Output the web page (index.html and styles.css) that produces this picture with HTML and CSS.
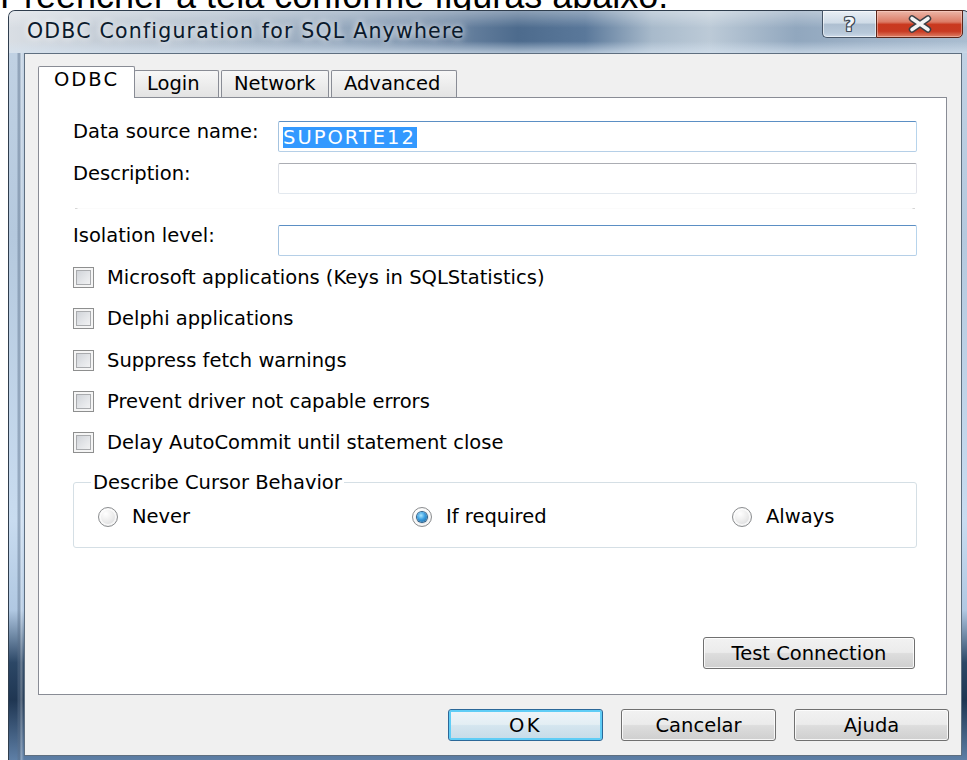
FILE: index.html
```html
<!DOCTYPE html>
<html lang="pt">
<head>
<meta charset="utf-8">
<title>ODBC Configuration for SQL Anywhere</title>
<link rel="stylesheet" href="styles.css">
</head>
<body>
  <div class="intro"><p class="intro-text">Preencher a tela conforme figuras abaixo.</p></div>

  <div class="window">
    <div class="titlebar">
      <span class="title">ODBC Configuration for SQL Anywhere</span>
      <div class="caption-buttons">
        <button class="cap-btn cap-help" type="button"><span class="help-glyph">?</span></button>
        <button class="cap-btn cap-close" type="button">
          <svg class="close-glyph" width="26" height="18" viewBox="0 0 26 18" aria-hidden="true">
            <path d="M5 3.5 L21 14.5 M21 3.5 L5 14.5" stroke="#3a3f45" stroke-width="6.5" stroke-linecap="round" fill="none"/>
            <path d="M5 3.5 L21 14.5 M21 3.5 L5 14.5" stroke="#f4f4f4" stroke-width="3.6" stroke-linecap="round" fill="none"/>
          </svg>
        </button>
      </div>
    </div>

    <div class="frame">
      <div class="client">
        <div class="tabstrip">
          <div class="tab tab-active tab-odbc">ODBC</div>
          <div class="tab tab-login">Login</div>
          <div class="tab tab-network">Network</div>
          <div class="tab tab-advanced">Advanced</div>
        </div>

        <div class="tabpanel">
          <div class="fields">
            <span class="field-label">Data source name:</span>
            <div class="textbox textbox-focus"><span class="selection">SUPORTE12</span></div>
            <span class="field-label">Description:</span>
            <div class="textbox"></div>
            <div class="separator"></div>
            <span class="field-label">Isolation level:</span>
            <div class="textbox textbox-focus"></div>
          </div>

          <ul class="checks">
            <li class="check-row"><span class="checkbox"></span>Microsoft applications (Keys in SQLStatistics)</li>
            <li class="check-row"><span class="checkbox"></span>Delphi applications</li>
            <li class="check-row"><span class="checkbox"></span>Suppress fetch warnings</li>
            <li class="check-row"><span class="checkbox"></span>Prevent driver not capable errors</li>
            <li class="check-row"><span class="checkbox"></span>Delay AutoCommit until statement close</li>
          </ul>

          <fieldset class="group">
            <legend class="group-title">Describe Cursor Behavior</legend>
            <div class="radios">
              <span class="radio-row"><span class="radio"></span>Never</span>
              <span class="radio-row"><span class="radio radio-on"></span>If required</span>
              <span class="radio-row"><span class="radio"></span>Always</span>
            </div>
          </fieldset>

          <div class="panel-actions">
            <button class="btn btn-test" type="button">Test Connection</button>
          </div>
        </div>

        <div class="dialog-buttons">
          <button class="btn btn-dialog btn-default" type="button"><span class="caps">OK</span></button>
          <button class="btn btn-dialog" type="button">Cancelar</button>
          <button class="btn btn-dialog" type="button">Ajuda</button>
        </div>
      </div>
    </div>
  </div>
</body>
</html>
```

FILE: styles.css
```css
html, body {
  margin: 0;
  height: 100%;
  overflow: hidden;
  background: #fff;
}

body {
  font-family: "DejaVu Sans", Verdana, sans-serif;
  font-size: 19.5px;
  color: #000;
}

/* heading line above the dialog, mostly scrolled out of view */
.intro {
  height: 10px;
  overflow: hidden;
}

.intro-text {
  margin: -22.5px 0 0 0;
  font: 36px/36px "Liberation Sans", Arial, sans-serif;
  white-space: nowrap;
}

/* ---------- window chrome ---------- */
.window {
  box-sizing: border-box;
  width: 962px;
  height: 750px;
  margin-left: 8px;
  display: flex;
  flex-direction: column;
  border: 1px solid #2f3d4d;
  border-bottom: none;
  border-radius: 7px 7px 0 0;
  background:
    linear-gradient(to right, rgba(255,255,255,0) 0, rgba(255,255,255,0) 8px, rgba(90,110,135,.45) 9px, rgba(90,110,135,.45) 11px, rgba(255,255,255,.35) 12px, rgba(255,255,255,0) 15px),
    linear-gradient(to bottom, #c3d3e4 0%, #b5c9de 30%, #c9dcf0 68%, #b0c8e2 80%, #2c4766 87%, #1f3652 92%, #5e7fa6 100%);
}

.titlebar {
  height: 42px;
  display: flex;
  justify-content: space-between;
  align-items: flex-start;
  border-radius: 6px 6px 0 0;
  background:
    linear-gradient(to bottom, rgba(255,255,255,.35) 0, rgba(255,255,255,0) 40%, rgba(255,255,255,0) 72%, rgba(214,227,240,.7) 100%),
    linear-gradient(to right, #d9dee4 0, #c3ccd6 10%, #aebccb 22%, #91a5bb 35%, #7189a5 45%, #4d6b8d 53%, #5a789a 60%, #a8bacb 67%, #bccad7 73%, #91a7be 82%, #9fb3c8 90%, #aabdd0 100%);
}

.title {
  padding: 8px 0 0 18px;
  font-size: 20.5px;
  line-height: 24px;
  letter-spacing: 1.2px;
  color: #0b1a2c;
  white-space: nowrap;
  text-shadow: 0 0 6px rgba(255,255,255,.9), 0 0 12px rgba(255,255,255,.7);
}

.caption-buttons {
  display: flex;
  margin: -1px 6px 0 0;
}

.cap-btn {
  box-sizing: border-box;
  height: 28px;
  padding: 0;
  display: flex;
  align-items: center;
  justify-content: center;
  border: 1px solid #465567;
  cursor: default;
}

.cap-help {
  width: 54px;
  border-right: none;
  border-radius: 0 0 0 5px;
  background: linear-gradient(#e9eff5 0, #cfdbe7 45%, #aebfd1 52%, #b8c9da 85%, #cfdceb 100%);
  box-shadow: inset 0 0 0 1px rgba(255,255,255,.55);
}

.help-glyph {
  font-family: "DejaVu Sans", sans-serif;
  font-weight: bold;
  font-size: 20px;
  line-height: 1;
  color: #f3f6f9;
  text-shadow: 1px 0 0 #3e4854, -1px 0 0 #3e4854, 0 1px 0 #3e4854, 0 -1px 0 #3e4854,
               1px 1px 0 #3e4854, -1px -1px 0 #3e4854, 1px -1px 0 #3e4854, -1px 1px 0 #3e4854;
}

.cap-close {
  width: 87px;
  border-color: #5a2519;
  border-radius: 0 0 5px 0;
  background: linear-gradient(#ecb6a8 0, #dc7c66 42%, #c9391f 52%, #c83a22 78%, #de8167 100%);
  box-shadow: inset 0 0 0 1px rgba(255,220,210,.45);
}

.close-glyph {
  display: block;
  margin-top: -1px;
}

/* ---------- dialog body ---------- */
.frame {
  flex: 1;
  display: flex;
  padding: 0 7px 4px 15px;
}

.client {
  flex: 1;
  display: flex;
  flex-direction: column;
  border: 1px solid #5f6f80;
  background: #f0f0f0;
  padding: 12px 14px 14px 13px;
}

/* tabs */
.tabstrip {
  display: flex;
  align-items: flex-end;
  height: 31px;
}

.tab {
  box-sizing: border-box;
  height: 27px;
  padding-left: 12px;
  border: 1px solid #898c95;
  border-bottom: none;
  border-radius: 2px 2px 0 0;
  background: linear-gradient(#f7f7f7 0, #ededed 50%, #e3e3e3 100%);
  line-height: 25px;
  white-space: nowrap;
}

.tab-active {
  position: relative;
  z-index: 1;
  height: 32px;
  margin-bottom: -1px;
  padding-left: 15px;
  line-height: 26px;
  letter-spacing: 2px;
  background: #fff;
}

.tab-odbc { width: 97px; }
.tab-login { width: 85px; margin-left: -1px; }
.tab-network { width: 108px; margin-left: 2px; }
.tab-advanced { width: 126px; margin-left: 2px; }

.tabpanel {
  flex: 1;
  display: flex;
  flex-direction: column;
  border: 1px solid #898c95;
  background: #fff;
  padding: 23px 29px 25px 34px;
}

/* text fields */
.fields {
  display: grid;
  grid-template-columns: 205px 1fr;
  grid-template-rows: 31px 31px 9px 31px;
  row-gap: 11px;
}

.field-label {
  margin-top: -1px;
  line-height: 23px;
  white-space: nowrap;
}

.textbox {
  box-sizing: border-box;
  height: 31px;
  padding: 4px;
  border: 1px solid;
  border-color: #abadb3 #e2e3ea #e3e9ef #dbdfe6;
  border-radius: 2px;
  background: #fff;
}

.textbox-focus {
  border-color: #5b8fc4 #b7d4ec #b5cfe7 #a4c3e0;
}

.selection {
  display: inline-block;
  line-height: 21px;
  padding-right: 1px;
  letter-spacing: 2px;
  background: #3399ff;
  color: #fff;
}

.separator {
  grid-column: 1 / -1;
  align-self: start;
  height: 1px;
  margin: 3px 2px 0;
  background: linear-gradient(to right, #d6d6d6 0, #d6d6d6 2px, #fbfbfb 3px, #fbfbfb calc(100% - 3px), #d6d6d6 calc(100% - 2px));
}

/* check boxes */
.checks {
  list-style: none;
  margin: 11px 0 0;
  padding: 0;
  display: flex;
  flex-direction: column;
  gap: 20.3px;
}

.check-row {
  display: flex;
  align-items: center;
  gap: 13px;
  height: 21px;
  line-height: 21px;
  white-space: nowrap;
}

.checkbox {
  box-sizing: border-box;
  flex: none;
  width: 21px;
  height: 21px;
  border: 1px solid #8e8f8f;
  background: linear-gradient(135deg, #c9cdd3 0, #e4e6e9 55%, #f8f8f8 100%);
  box-shadow: inset 0 0 0 2px #f5f5f5, inset 0 0 0 3px #a9abae;
}

/* radio group */
.group {
  margin: 18px 0 0;
  padding: 12px 20px 20px 24px;
  min-width: 0;
  border: 1px solid #d5dfe5;
  border-radius: 3px;
}

.group-title {
  margin-left: -7px;
  padding: 0 2px;
}

.radios {
  display: grid;
  grid-template-columns: 314px 320px auto;
}

.radio-row {
  display: flex;
  align-items: center;
  gap: 14px;
  height: 21px;
  line-height: 21px;
  white-space: nowrap;
}

.radio {
  box-sizing: border-box;
  position: relative;
  flex: none;
  width: 20px;
  height: 20px;
  border: 1px solid #8c8e90;
  border-radius: 50%;
  background: radial-gradient(circle at 38% 32%, #ffffff 0, #ececec 45%, #cfd0d2 100%);
  box-shadow: inset 0 0 0 2px rgba(255,255,255,.7);
}

.radio-on::after {
  content: "";
  position: absolute;
  left: 4px;
  top: 4px;
  width: 10px;
  height: 10px;
  border-radius: 50%;
  background: radial-gradient(circle at 40% 35%, #a8e6ff 0, #3b9ee0 45%, #155f96 100%);
  box-shadow: 0 0 0 1px #2b5f88;
}

/* buttons */
.panel-actions {
  margin-top: auto;
  display: flex;
  justify-content: flex-end;
}

.btn {
  box-sizing: border-box;
  height: 32px;
  padding: 0;
  border: 1px solid #707070;
  border-radius: 3px;
  background: linear-gradient(#f2f2f2 0, #ebebeb 48%, #dddddd 52%, #cfcfcf 100%);
  box-shadow: inset 0 0 0 1px rgba(255,255,255,.8);
  font: inherit;
  color: #000;
  white-space: nowrap;
  cursor: default;
}

.btn-test {
  width: 212px;
  margin-right: 2px;
}

.dialog-buttons {
  display: flex;
  justify-content: flex-end;
  gap: 18px;
  margin: 14px -2px 0 0;
}

.btn-dialog {
  width: 155px;
}

.btn-default {
  border-color: #2c6898;
  background: linear-gradient(#eef5f9 0, #e3eef4 48%, #d4e5ef 52%, #c6dbe8 100%);
  box-shadow: inset 0 0 0 2px #5fcdf6;
}

.caps {
  letter-spacing: 2.5px;
}
```
